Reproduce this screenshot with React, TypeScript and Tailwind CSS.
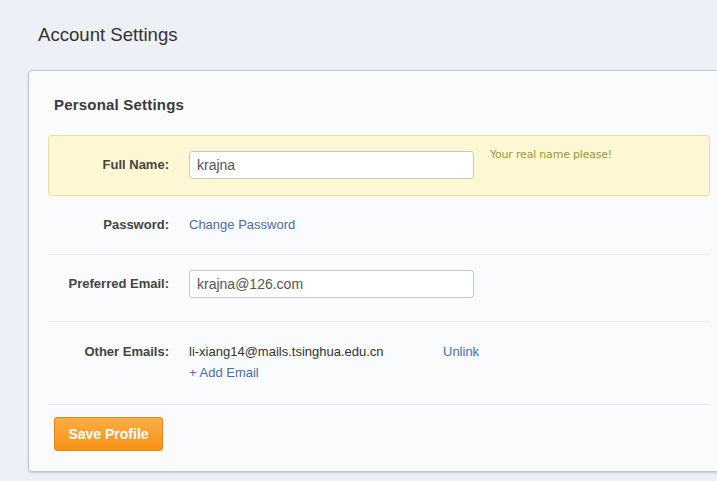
import React from "react";

const sans = { fontFamily: '"Liberation Sans", Arial, sans-serif' };

export default function App() {
  return (
    <div className="w-[717px] h-[481px] overflow-hidden bg-[#edf1f7] text-[#333]" style={sans}>
      <div className="pt-[24px] pl-[38px] text-[18.6px] leading-[22px] text-[#333]">Account Settings</div>
      <div className="mt-[24px] ml-[28px] w-[720px] h-[402px] rounded-[4px] border border-[#c3c7cc] bg-[#f9fbfd] shadow-[0_1px_2px_rgba(0,0,0,0.15)] pl-[19px]">
        <div className="pt-[25px] pl-[6px] text-[15px] tracking-[0.2px] leading-[18px] font-bold text-[#3a3a3a]">Personal Settings</div>
        <div className="mt-[21px] w-[662px] flex flex-col">
          {/* Full name */}
          <div className="h-[61px] flex items-start rounded-[3px] border border-[#e8dfa6] bg-[#fdf8d3] pt-[15px]">
            <div className="w-[120px] text-right text-[13px] font-bold leading-[28px] text-[#444]">Full Name:</div>
            <input
              readOnly
              value="krajna"
              className="ml-[20px] w-[285px] h-[28px] rounded-[3px] border border-[#c8c8c8] bg-white px-[7px] text-[14px] text-[#555] outline-none"
              style={sans}
            />
            <div className="ml-[16px] mt-[-3px] text-[11px] tracking-[-0.2px] leading-[14px] text-[#a0963a]" style={{ fontFamily: '"DejaVu Sans", Verdana, sans-serif' }}>
              Your real name please!
            </div>
          </div>
          {/* Password */}
          <div className="h-[59px] flex items-center border-b border-[#e6e9ed] pl-[1px]">
            <div className="w-[120px] text-right text-[13px] font-bold text-[#444]">Password:</div>
            <div className="ml-[20px] text-[13px] text-[#4a6ea8]">Change Password</div>
          </div>
          {/* Preferred Email */}
          <div className="h-[67px] flex items-start border-b border-[#e6e9ed] pt-[15px] pl-[1px]">
            <div className="w-[120px] text-right text-[13px] font-bold leading-[28px] text-[#444]">Preferred Email:</div>
            <input
              readOnly
              value="krajna@126.com"
              className="ml-[20px] w-[285px] h-[28px] rounded-[3px] border border-[#c8c8c8] bg-white px-[7px] text-[14px] text-[#555] outline-none"
              style={sans}
            />
            <div className="ml-[16px] mt-[-2px] w-[168px] text-[12px] leading-[14px] text-[#fbfcfe]" style={{ fontFamily: '"DejaVu Sans", Verdana, sans-serif' }}>
              Email updates, notifications and password resets are sent here.
            </div>
          </div>
          {/* Other Emails */}
          <div className="h-[83px] flex items-start border-b border-[#e6e9ed] pt-[19px] pl-[1px]">
            <div className="w-[120px] text-right text-[13px] font-bold leading-[21px] text-[#444]">Other Emails:</div>
            <div className="ml-[20px] w-[254px] flex flex-col text-[13px] leading-[21px]">
              <span className="text-[#333]">li-xiang14@mails.tsinghua.edu.cn</span>
              <span className="text-[#4a6ea8]">+ Add Email</span>
            </div>
            <div className="text-[13px] leading-[21px] text-[#4a6ea8]">Unlink</div>
            <div className="ml-[10px] mt-[-7px] w-[170px] text-[12px] leading-[15px] text-[#fbfcfe]" style={{ fontFamily: '"DejaVu Sans", Verdana, sans-serif' }}>
              If you have another account on this site, you can link it here by adding its email.
            </div>
          </div>
          {/* Save */}
          <div className="pt-[12px] pl-[6px]">
            <button
              className="w-[109px] h-[34px] rounded-[3px] border border-[#e38716] bg-gradient-to-b from-[#fbad45] to-[#f7920f] text-white text-[14px] font-bold"
              style={sans}
            >
              Save Profile
            </button>
          </div>
        </div>
      </div>
    </div>
  );
}
